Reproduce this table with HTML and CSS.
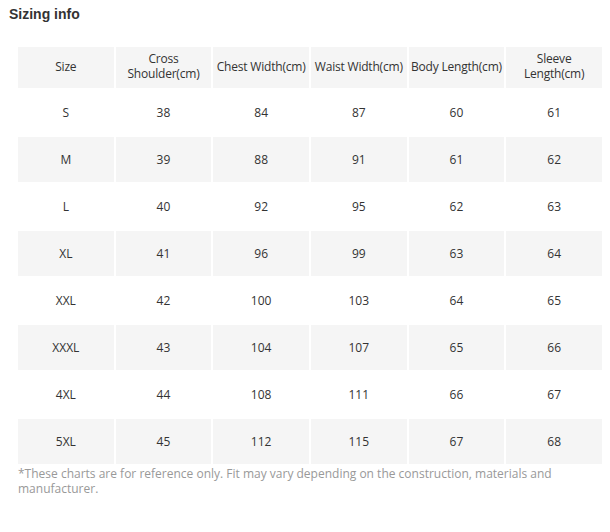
FILE: index.html
```html
<!DOCTYPE html>
<html>
<head>
<meta charset="utf-8">
<link rel="stylesheet" href="styles.css">
</head>
<body>
<div class="page">
  <h2 class="title">Sizing info</h2>
  <table class="chart">
    <thead>
      <tr>
        <th>Size</th>
        <th>Cross Shoulder(cm)</th>
        <th class="one">Chest Width(cm)</th>
        <th class="one">Waist Width(cm)</th>
        <th class="one">Body Length(cm)</th>
        <th>Sleeve Length(cm)</th>
      </tr>
    </thead>
    <tbody>
      <tr><td>S</td><td>38</td><td>84</td><td>87</td><td>60</td><td>61</td></tr>
      <tr><td>M</td><td>39</td><td>88</td><td>91</td><td>61</td><td>62</td></tr>
      <tr><td>L</td><td>40</td><td>92</td><td>95</td><td>62</td><td>63</td></tr>
      <tr><td>XL</td><td>41</td><td>96</td><td>99</td><td>63</td><td>64</td></tr>
      <tr><td>XXL</td><td>42</td><td>100</td><td>103</td><td>64</td><td>65</td></tr>
      <tr><td>XXXL</td><td>43</td><td>104</td><td>107</td><td>65</td><td>66</td></tr>
      <tr><td>4XL</td><td>44</td><td>108</td><td>111</td><td>66</td><td>67</td></tr>
      <tr><td>5XL</td><td>45</td><td>112</td><td>115</td><td>67</td><td>68</td></tr>
    </tbody>
  </table>
  <p class="note">*These charts are for reference only. Fit may vary depending on the construction, materials and manufacturer.</p>
</div>
</body>
</html>
```
FILE: styles.css
```css
html, body {
  margin: 0;
  padding: 0;
  background: #fff;
}
.page {
  padding: 5px 0 0 0;
  font-family: "Open Sans", "DejaVu Sans", sans-serif;
  color: #333;
}
.title {
  margin: 0 0 0 9px;
  font-family: "Liberation Sans", Arial, sans-serif;
  font-weight: bold;
  font-size: 14px;
  line-height: 18px;
  height: 22px;
  color: #333;
}
.chart {
  margin: 18px 0 0 16px;
  width: 588px;
  border-collapse: separate;
  border-spacing: 2px;
  table-layout: fixed;
  font-size: 12px;
  color: #333;
}
.chart th, .chart td {
  padding: 0;
  text-align: center;
  vertical-align: middle;
  font-weight: normal;
  line-height: 15px;
}
.chart th {
  height: 38px;
  padding-bottom: 3px;
  background: #f5f5f5;
  letter-spacing: -0.2px;
}
.chart th.one {
  white-space: nowrap;
}
.chart td {
  height: 45px;
}
.chart tbody tr:nth-child(even) td {
  background: #f5f5f5;
}
.note {
  margin: 0 0 0 18px;
  width: 560px;
  font-size: 12px;
  line-height: 15px;
  color: #999;
}
```
